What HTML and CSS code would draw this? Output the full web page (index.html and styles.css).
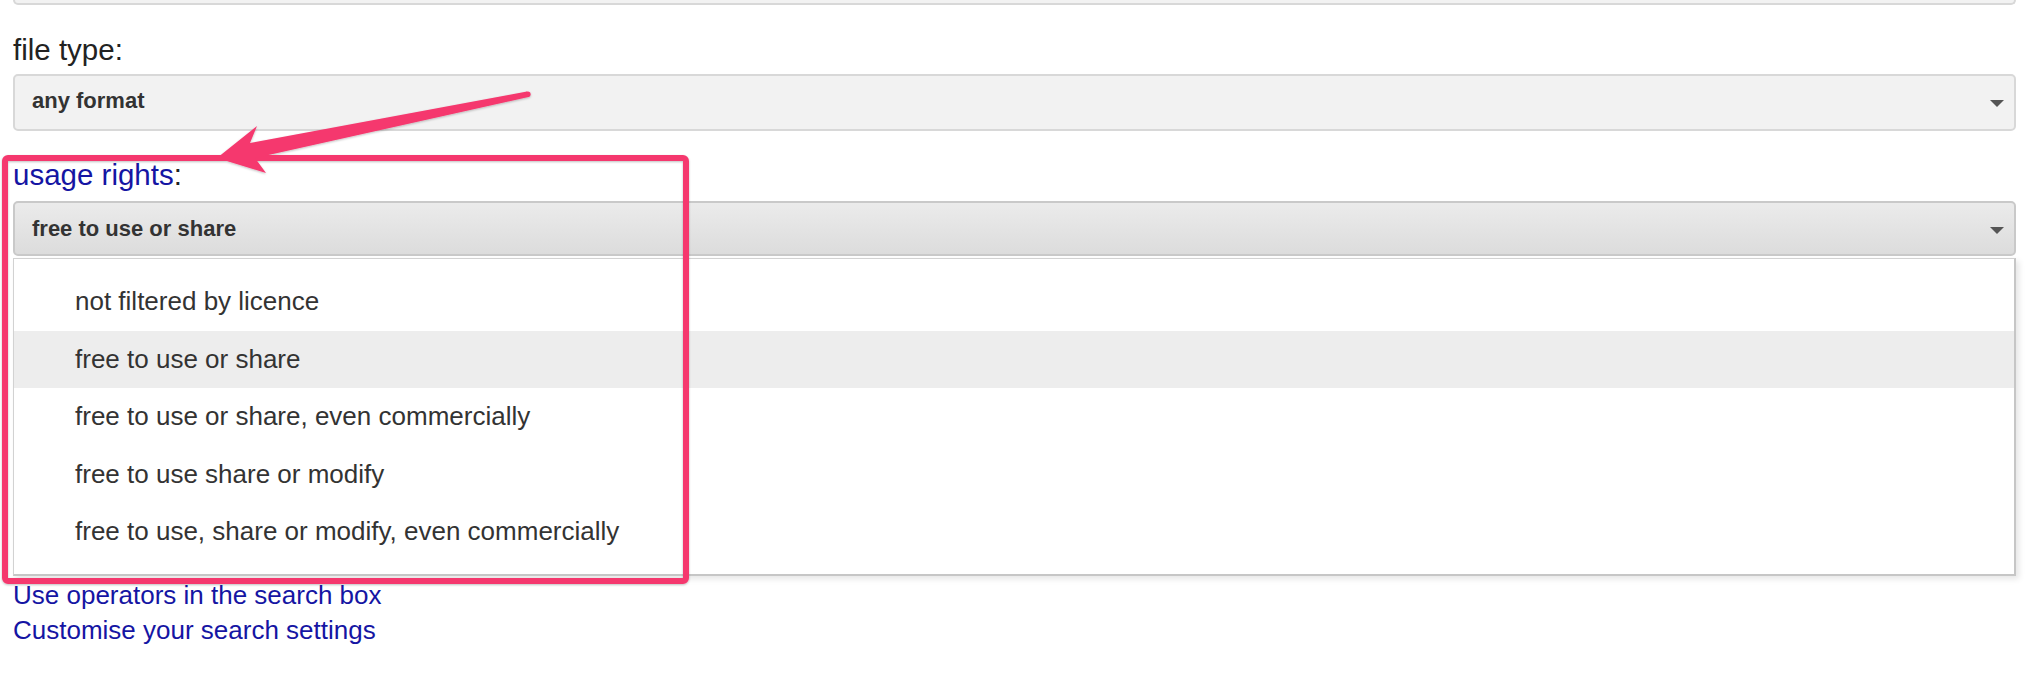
FILE: index.html
```html
<!DOCTYPE html>
<html lang="en">
<head>
    <meta charset="UTF-8">
    <meta name="viewport" content="width=device-width, initial-scale=1.0">
    <title>Advanced search</title>
    <link rel="stylesheet" href="styles.css">
</head>
<body>
    <div class="page">
        <!-- bottom of the field above, cut off by the screenshot -->
        <div class="select stub"></div>

        <div class="field first">
            <label class="field-label">file type:</label>
            <div class="select">
                <span class="select-text">any format</span>
                <span class="caret"></span>
            </div>
        </div>

        <div class="field">
            <label class="field-label"><span class="hl">usage rights</span>:</label>
            <div class="select open">
                <span class="select-text">free to use or share</span>
                <span class="caret"></span>
            </div>
            <ul class="menu">
                <li>not filtered by licence</li>
                <li class="selected">free to use or share</li>
                <li>free to use or share, even commercially</li>
                <li>free to use share or modify</li>
                <li>free to use, share or modify, even commercially</li>
            </ul>
        </div>

        <div class="links">
            <a href="#">Use operators in the search box</a>
            <a href="#">Customise your search settings</a>
        </div>
    </div>

    <!-- annotation drawn over the page -->
    <svg class="markup" width="2031" height="674" viewBox="0 0 2031 674">
        <defs>
            <filter id="shadow" x="-5%" y="-5%" width="110%" height="110%">
                <feDropShadow dx="0" dy="1" stdDeviation="1.2" flood-color="#000" flood-opacity="0.25"/>
            </filter>
        </defs>
        <g filter="url(#shadow)" fill="#f5386e">
            <rect x="5" y="158" width="681" height="423" rx="3" fill="none" stroke="#f5386e" stroke-width="6"/>
            <polygon points="217,158 257,126 250,143 527,91.5 528.5,97 255,158 266,173"/>
            <circle cx="527.8" cy="94.3" r="2.8"/>
        </g>
    </svg>
</body>
</html>
```

FILE: styles.css
```css
body {
    margin: 0;
    font-family: "Liberation Sans", Arial, sans-serif;
    background: #fff;
}
.page {
    padding: 0 15px 0 13px;
}
.select {
    display: flex;
    align-items: center;
    box-sizing: border-box;
    height: 57px;
    padding: 0 10px 4px 17px;
    border: 2px solid #d8d8d8;
    border-radius: 5px;
    background: #f2f2f2;
    color: #333;
    font-size: 22px;
    font-weight: bold;
}
.select.stub {
    height: 5px;
    padding: 0;
    border-top: none;
    border-radius: 0 0 5px 5px;
}
.select.open {
    height: 55px;
    padding-bottom: 0;
    border-color: #c9c9c9;
    background: linear-gradient(#ebebeb, #dcdcdc);
}
.select-text {
    line-height: 49px;
}
.select.open .select-text {
    line-height: 51px;
}
.caret {
    margin-left: auto;
    margin-top: 5px;
    width: 0;
    height: 0;
    border-left: 7px solid transparent;
    border-right: 7px solid transparent;
    border-top: 7px solid #555;
}
.select.open .caret {
    margin-top: 4px;
}
.field {
    margin-top: 26px;
}
.field.first {
    margin-top: 27px;
}
.field-label {
    display: block;
    margin-bottom: 6px;
    font-size: 29.5px;
    line-height: 36px;
    color: #222;
}
.field + .field .field-label {
    margin-bottom: 8px;
}
.hl {
    color: #1515a3;
}
.menu {
    list-style: none;
    margin: 2px 0 0;
    padding: 14px 0 13px;
    border: 1px solid #d2d2d2;
    border-right: 2px solid #c6c6c6;
    border-bottom: 2px solid #c6c6c6;
    box-shadow: 3px 3px 6px rgba(0, 0, 0, 0.1);
    background: #fff;
}
.menu li {
    padding-left: 61px;
    font-size: 26px;
    line-height: 57.5px;
    color: #333;
}
.menu li.selected {
    background: #ededed;
}
.links {
    margin-top: 2px;
}
.links a {
    display: block;
    font-size: 26px;
    line-height: 35px;
    color: #1515a3;
    text-decoration: none;
}
.markup {
    position: absolute;
    top: 0;
    left: 0;
    pointer-events: none;
}
```
